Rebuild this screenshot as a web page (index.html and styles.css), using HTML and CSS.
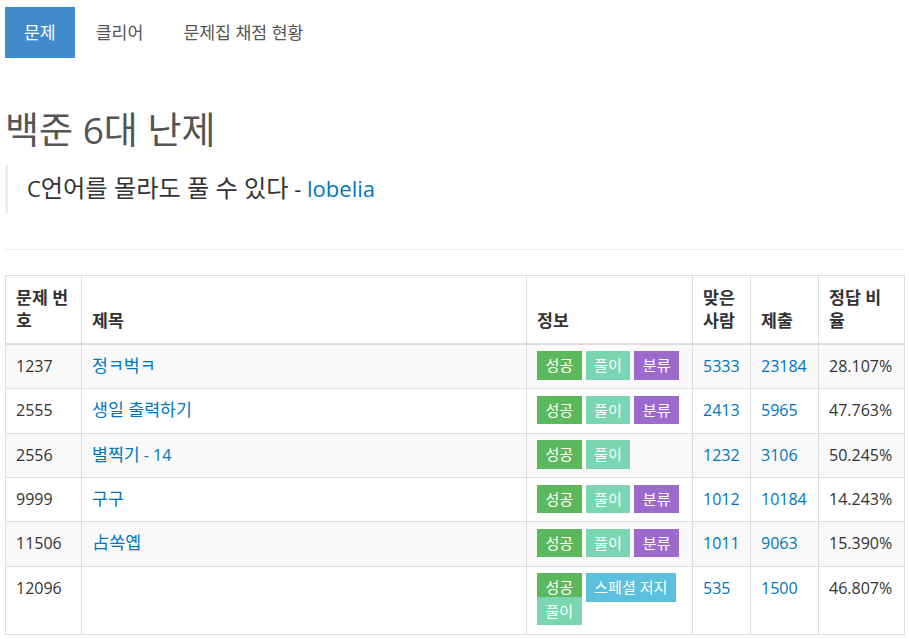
FILE: index.html
```html
<!DOCTYPE html>
<html lang="ko">
<head>
<meta charset="utf-8">
<title>백준 6대 난제</title>
<link rel="stylesheet" href="styles.css">
</head>
<body>
<div class="page">
  <ul class="tabs">
    <li class="active"><a href="#">문제</a></li>
    <li><a href="#">클리어</a></li>
    <li><a href="#">문제집 채점 현황</a></li>
  </ul>

  <div class="page-header">
    <h1>백준 6대 난제</h1>
    <blockquote>C<span class="k">언어를 몰라도 풀 수 있다</span> - <a href="#">lobelia</a></blockquote>
  </div>

  <table class="problems">
    <colgroup>
      <col class="c-id">
      <col class="c-title">
      <col class="c-info">
      <col class="c-ac">
      <col class="c-sub">
      <col class="c-rate">
    </colgroup>
    <thead>
      <tr>
        <th>문제 번호</th>
        <th>제목</th>
        <th>정보</th>
        <th>맞은 사람</th>
        <th>제출</th>
        <th>정답 비율</th>
      </tr>
    </thead>
    <tbody>
      <tr>
        <td>1237</td>
        <td><a href="#"><span class="k">정ㅋ벅ㅋ</span></a></td>
        <td><span class="label ok">성공</span> <span class="label sol">풀이</span> <span class="label tag">분류</span></td>
        <td><a href="#">5333</a></td>
        <td><a href="#">23184</a></td>
        <td>28.107%</td>
      </tr>
      <tr>
        <td>2555</td>
        <td><a href="#"><span class="k">생일 출력하기</span></a></td>
        <td><span class="label ok">성공</span> <span class="label sol">풀이</span> <span class="label tag">분류</span></td>
        <td><a href="#">2413</a></td>
        <td><a href="#">5965</a></td>
        <td>47.763%</td>
      </tr>
      <tr>
        <td>2556</td>
        <td><a href="#"><span class="k">별찍기</span> - 14</a></td>
        <td><span class="label ok">성공</span> <span class="label sol">풀이</span></td>
        <td><a href="#">1232</a></td>
        <td><a href="#">3106</a></td>
        <td>50.245%</td>
      </tr>
      <tr>
        <td>9999</td>
        <td><a href="#"><span class="k">구구</span></a></td>
        <td><span class="label ok">성공</span> <span class="label sol">풀이</span> <span class="label tag">분류</span></td>
        <td><a href="#">1012</a></td>
        <td><a href="#">10184</a></td>
        <td>14.243%</td>
      </tr>
      <tr>
        <td>11506</td>
        <td><a href="#"><span class="k">占쏙옙</span></a></td>
        <td><span class="label ok">성공</span> <span class="label sol">풀이</span> <span class="label tag">분류</span></td>
        <td><a href="#">1011</a></td>
        <td><a href="#">9063</a></td>
        <td>15.390%</td>
      </tr>
      <tr>
        <td>12096</td>
        <td></td>
        <td><span class="label ok">성공</span> <span class="label spj">스페셜 저지</span> <span class="label sol">풀이</span></td>
        <td><a href="#">535</a></td>
        <td><a href="#">1500</a></td>
        <td>46.807%</td>
      </tr>
    </tbody>
  </table>
</div>
</body>
</html>
```

FILE: styles.css
```css
* { box-sizing: border-box; }

html, body {
  margin: 0;
  padding: 0;
  background: #fff;
}

body {
  font-family: "Open Sans", "Noto Sans CJK KR", sans-serif;
  font-size: 16px;
  line-height: 23px;
  color: #333;
}

a {
  color: #0076c0;
  text-decoration: none;
}

.k {
  line-height: 1;
}

.page {
  padding: 7px 5px 0 5px;
}

/* tabs */
.tabs {
  list-style: none;
  margin: 0;
  padding: 0;
  display: flex;
  gap: 2px;
}

.tabs a {
  display: block;
  padding: 15px 19px;
  font-size: 17.25px;
  line-height: 21px;
  color: #555;
}

.tabs .active a {
  background: #428bca;
  color: #fff;
}

/* header */
.page-header {
  margin: 52px 0 25px 0;
  padding-bottom: 36px;
  border-bottom: 1px solid #eee;
}

.page-header h1 {
  margin: 0 0 15px 0;
  font-size: 37px;
  line-height: 40px;
  font-weight: 400;
  color: #555;
}

.page-header blockquote {
  margin: 0;
  padding: 9px 0 11px 19px;
  border-left: 3px solid #eee;
  font-size: 22px;
  line-height: 28px;
  color: #333;
}

.page-header .k {
  font-size: 1.1em;
}

/* table */
.problems {
  width: 899px;
  border-collapse: collapse;
  table-layout: fixed;
  border: 1px solid #ddd;
  line-height: 23.4px;
}

.c-id { width: 76px; }
.c-title { width: 445px; }
.c-info { width: 166px; }
.c-ac { width: 58px; }
.c-sub { width: 68px; }
.c-rate { width: 86px; }

.problems th,
.problems td {
  border: 1px solid #ddd;
  padding: 10px;
  text-align: left;
}

.problems th {
  vertical-align: bottom;
  font-weight: 700;
  font-size: 17.28px;
  border-bottom-width: 2px;
}

.problems td {
  vertical-align: top;
}

.problems .k {
  font-size: 1.08em;
}

.problems tbody tr:nth-child(odd) td {
  background: #f9f9f9;
}

/* labels */
.label {
  display: inline;
  font-size: 15.1px;
  line-height: 1;
  padding: 4.4px 8.4px 4px;
  color: #fff;
  white-space: nowrap;
}

.label.ok { background: #5cb85c; }
.label.sol { background: #7ad5b3; }
.label.tag { background: #9c6acc; }
.label.spj { background: #5bc0de; }
```
